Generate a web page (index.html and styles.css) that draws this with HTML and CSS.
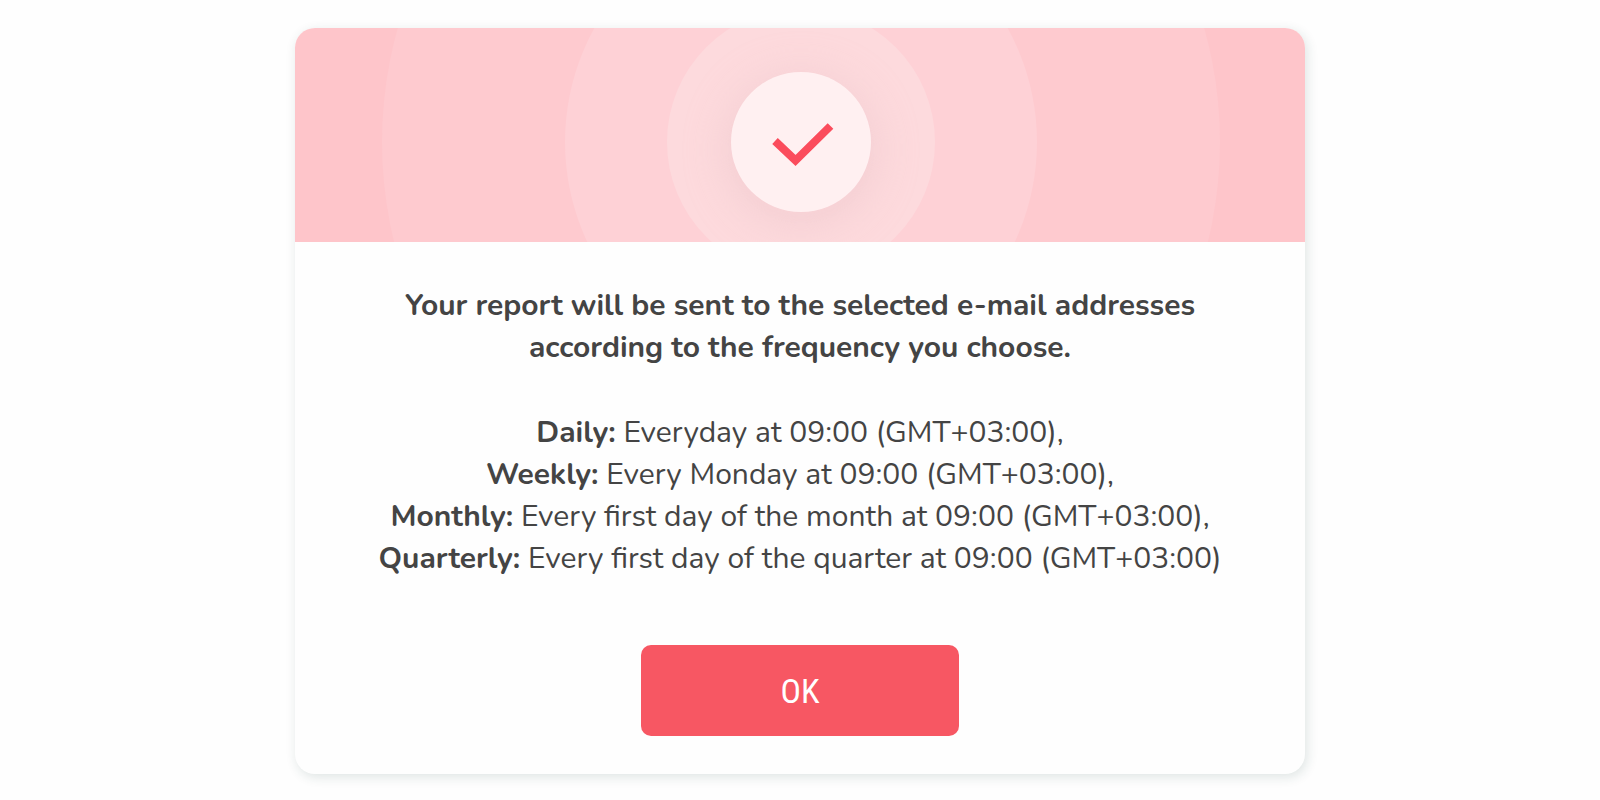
FILE: index.html
```html
<!DOCTYPE html>
<html lang="en">
<head>
    <meta charset="UTF-8">
    <meta name="viewport" content="width=device-width, initial-scale=1.0">
    <title>Report Scheduled</title>
    <link rel="stylesheet" href="styles.css">
</head>
<body>

    <div class="modal" role="dialog" aria-labelledby="modal-title">
        <svg class="modal-banner" viewBox="0 0 1010 214" preserveAspectRatio="xMidYMid slice" aria-hidden="true">
            <defs>
                <filter id="glow" x="-50%" y="-50%" width="200%" height="200%">
                    <feGaussianBlur stdDeviation="20" />
                </filter>
            </defs>
            <rect width="1010" height="214" fill="#fec5ca" />
            <circle cx="506" cy="114" r="419" fill="#fecacf" />
            <circle cx="506" cy="114" r="236" fill="#fed1d6" />
            <circle cx="506" cy="114" r="134" fill="#fddadd" />
            <circle cx="506" cy="122" r="76" fill="#ecc4c9" opacity="0.5" filter="url(#glow)" />
            <circle cx="506" cy="114" r="70" fill="#fff0f1" />
            <path d="M480 113 L500.500 132.500 L535.500 98" fill="none" stroke="#fb4c5c" stroke-width="8" />
        </svg>

        <div class="modal-body">
            <h2 id="modal-title">Your report will be sent to the selected e-mail addresses according to the frequency you choose.</h2>

            <ul class="schedule">
                <li><b>Daily:</b> Everyday at 09:00 (GMT+03:00),</li>
                <li><b>Weekly:</b> Every Monday at 09:00 (GMT+03:00),</li>
                <li><b>Monthly:</b> Every first day of the month at 09:00 (GMT+03:00),</li>
                <li><b>Quarterly:</b> Every first day of the quarter at 09:00 (GMT+03:00)</li>
            </ul>

            <button type="button" class="ok-btn">OK</button>
        </div>
    </div>

</body>
</html>
```
FILE: styles.css
```css
* {
    box-sizing: border-box;
}

body {
    margin: 0;
    padding: 28px 24px 24px;
    background-color: #fefefe;
    color: #444444;
    font-family: Nunito, Lato, sans-serif;
    font-size: 30px;
    line-height: 42px;
}

.modal {
    max-width: 1010px;
    margin: 0 auto;
    background-color: #fefefe;
    border-radius: 20px;
    box-shadow: 2px 3px 12px rgba(30, 70, 65, 0.14);
    overflow: hidden;
    text-align: center;
}

.modal-banner {
    display: block;
    width: 100%;
    height: 214px;
}

.modal-body {
    padding: 43px 80px 38px;
}

.modal-body h2 {
    margin: 0 0 43px;
    font-size: 30px;
    font-weight: bold;
}

.schedule {
    list-style: none;
    margin: 0 0 65px;
    padding: 0;
}

.ok-btn {
    display: block;
    width: 318px;
    max-width: 100%;
    height: 91px;
    margin: 0 auto;
    padding: 0;
    background-color: #f75763;
    color: #ffffff;
    border: none;
    border-radius: 10px;
    font-family: "Roboto Condensed", "Liberation Sans Narrow", Roboto, sans-serif;
    font-size: 34px;
    cursor: pointer;
}

.ok-btn:hover {
    background-color: #e94a56;
}
```
